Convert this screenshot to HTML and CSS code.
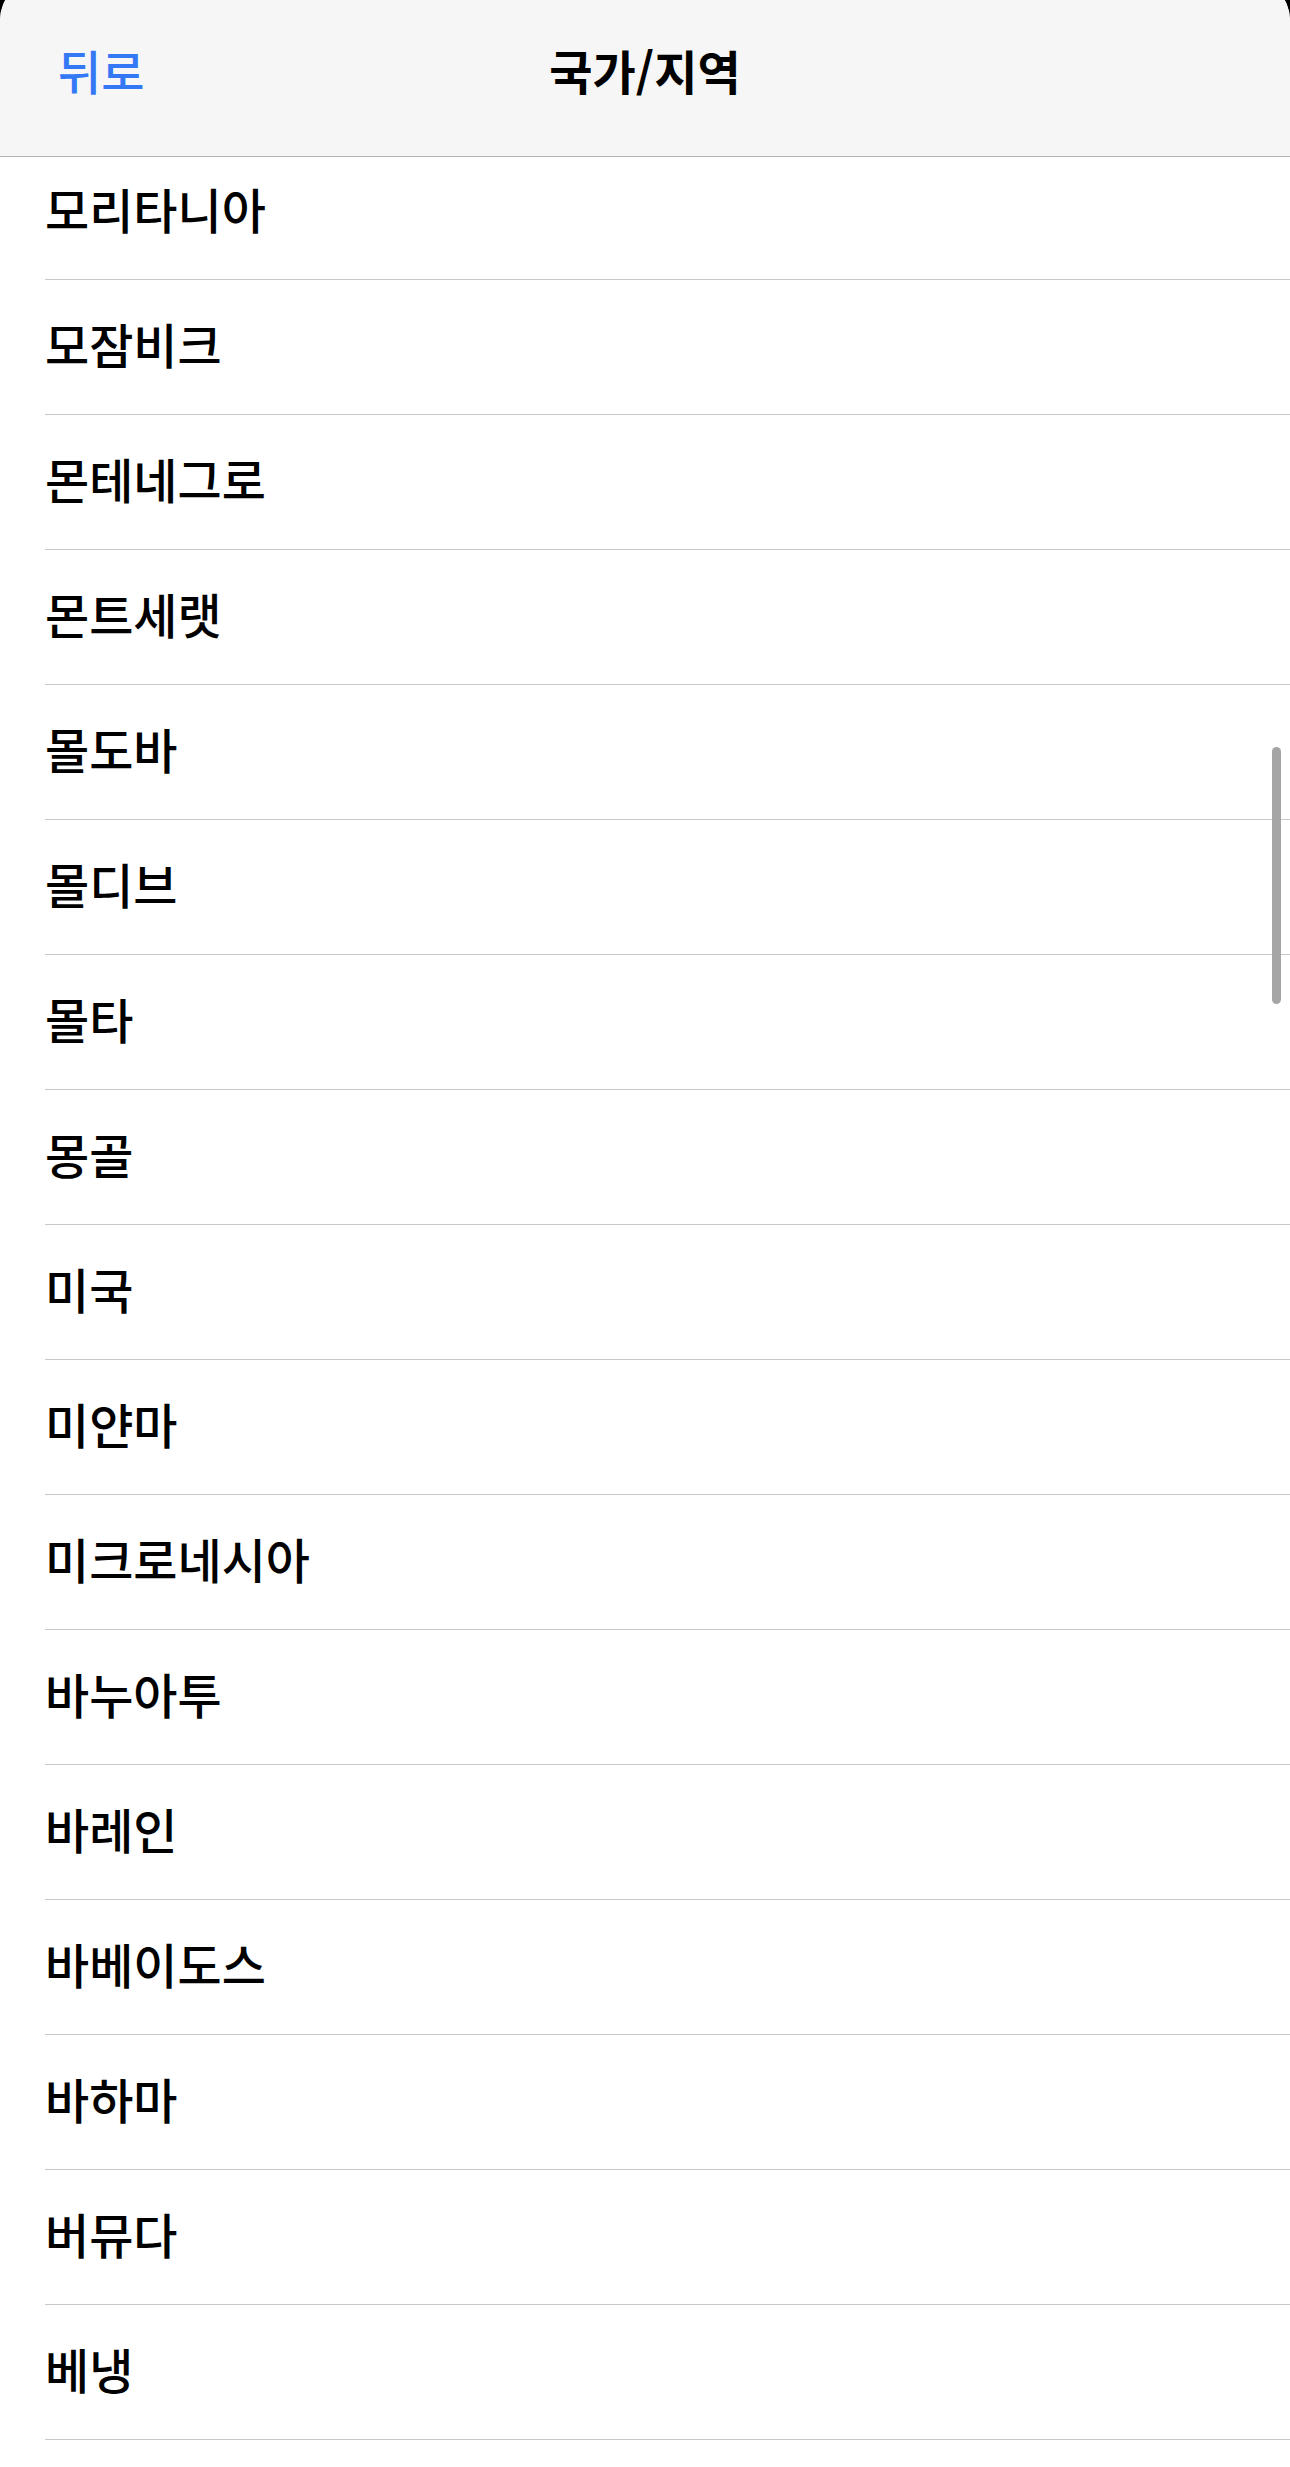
FILE: index.html
```html
<!DOCTYPE html>
<html lang="ko">
<head>
  <meta charset="UTF-8">
  <meta name="viewport" content="width=device-width, initial-scale=1.0">
  <title>국가/지역</title>
  <link rel="stylesheet" href="styles.css">
</head>
<body>
  <div class="sheet">
    <header class="nav">
      <a class="back" href="#">뒤로</a>
      <h1 class="title">국가/지역</h1>
    </header>
    <div class="viewport">
      <ul class="country-list">
        <li class="row">모리타니아</li>
        <li class="row">모잠비크</li>
        <li class="row">몬테네그로</li>
        <li class="row">몬트세랫</li>
        <li class="row">몰도바</li>
        <li class="row">몰디브</li>
        <li class="row">몰타</li>
        <li class="row">몽골</li>
        <li class="row">미국</li>
        <li class="row">미얀마</li>
        <li class="row">미크로네시아</li>
        <li class="row">바누아투</li>
        <li class="row">바레인</li>
        <li class="row">바베이도스</li>
        <li class="row">바하마</li>
        <li class="row">버뮤다</li>
        <li class="row">베냉</li>
      </ul>
      <div class="scrollbar"></div>
    </div>
  </div>
</body>
</html>
```

FILE: styles.css
```css
html,
body {
  margin: 0;
  background-color: #000;
  font-family: "Noto Sans CJK KR", "Noto Sans", sans-serif;
}

.sheet {
  margin-top: -20px;
  height: 2487px;
  background-color: #fff;
  border-radius: 40px 40px 0 0;
  overflow: hidden;
}

.nav {
  position: relative;
  display: flex;
  align-items: center;
  justify-content: center;
  height: 177px;
  padding: 20px 0 18px;
  box-sizing: border-box;
  background-color: #f6f6f6;
  border-bottom: 1px solid #b3b3b3;
}

.back {
  position: absolute;
  left: 58px;
  top: 20px;
  bottom: 18px;
  display: flex;
  align-items: center;
  font-size: 47px;
  font-weight: 500;
  color: #3478f6;
  text-decoration: none;
}

.title {
  margin: 0;
  font-size: 47px;
  font-weight: 700;
  color: #000;
}

.viewport {
  position: relative;
  height: 2310px;
  overflow: hidden;
}

.country-list {
  list-style: none;
  margin: -12px 0 0 45px;
  padding: 0;
}

.row {
  display: flex;
  align-items: center;
  height: 135px;
  padding-bottom: 8px;
  box-sizing: border-box;
  border-bottom: 1px solid #c8c8cb;
  font-size: 48px;
  font-weight: 500;
  color: #000;
}

.scrollbar {
  position: absolute;
  right: 9px;
  top: 590px;
  width: 9px;
  height: 257px;
  border-radius: 5px;
  background-color: #a5a5a5;
}
```
